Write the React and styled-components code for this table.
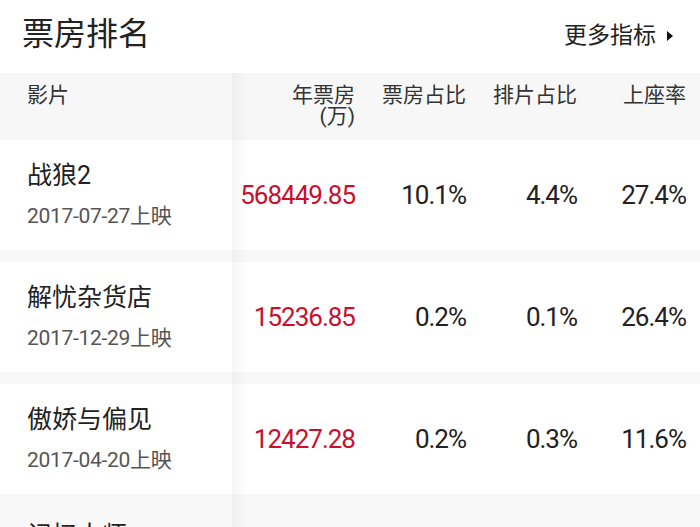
import React from "react";
import styled, { createGlobalStyle } from "styled-components";

const Global = createGlobalStyle`
  html, body { margin: 0; padding: 0; background: #fff; }
  body { font-family: Roboto, "Noto Sans CJK SC", sans-serif; }
  * { box-sizing: border-box; }
`;

const Page = styled.div`
  width: 700px;
  height: 527px;
  overflow: hidden;
  background: #fff;
`;

const TitleBar = styled.div`
  height: 73px;
  display: flex;
  align-items: center;
  justify-content: space-between;
  padding: 0 27px 6px 22px;
`;

const Title = styled.h1`
  margin: 0;
  font-size: 32px;
  font-weight: 400;
  line-height: 32px;
  color: #222;
`;

const More = styled.div`
  display: flex;
  align-items: center;
  gap: 11px;
  font-size: 23px;
  line-height: 24px;
  color: #222;
  margin-top: 4px;
`;

const Arrow = styled.span`
  width: 0;
  height: 0;
  border-top: 5px solid transparent;
  border-bottom: 5px solid transparent;
  border-left: 6px solid #111;
`;

const Table = styled.div`
  position: relative;
  &::after {
    content: "";
    position: absolute;
    left: 232px;
    top: 0;
    bottom: 0;
    width: 16px;
    background: linear-gradient(to right, rgba(0, 0, 0, 0.035), rgba(0, 0, 0, 0));
    pointer-events: none;
  }
`;

const cols = "232px 137px 111px 111px 109px";

const HeadRow = styled.div`
  display: grid;
  grid-template-columns: ${cols};
  height: 67px;
  background: #f7f7f7;
`;

const HeadCell = styled.div`
  padding: 12px 14px 0 ${(p) => (p.$first ? "27px" : "0")};
  text-align: ${(p) => (p.$first ? "left" : "right")};
  font-size: 21px;
  line-height: 21px;
  color: #333;
`;

const Row = styled.div`
  display: grid;
  grid-template-columns: ${cols};
  height: 110px;
  background: ${(p) => (p.$grey ? "#f8f8f8" : "#fff")};
  align-items: center;
`;

const Gap = styled.div`
  height: 12px;
  background: #f8f8f8;
`;

const NameCell = styled.div`
  display: flex;
  flex-direction: column;
  justify-content: center;
  gap: 10px;
  padding-left: 27px;
  align-self: ${(p) => (p.$top ? "start" : "center")};
  padding-top: ${(p) => (p.$top ? "14px" : "0")};
`;

const Name = styled.div`
  font-size: 25px;
  line-height: 32px;
  color: #222;
`;

const DateText = styled.div`
  font-size: 21px;
  line-height: 28px;
  color: #555;
  letter-spacing: -0.3px;
`;

const NumCell = styled.div`
  text-align: right;
  padding-right: 14px;
  font-size: 26px;
  letter-spacing: -1px;
  line-height: 30px;
  color: ${(p) => (p.$red ? "#c8102e" : "#222")};
`;

const films = [
  { name: "战狼2", date: "2017-07-27上映", box: "568449.85", share: "10.1%", sched: "4.4%", seat: "27.4%" },
  { name: "解忧杂货店", date: "2017-12-29上映", box: "15236.85", share: "0.2%", sched: "0.1%", seat: "26.4%" },
  { name: "傲娇与偏见", date: "2017-04-20上映", box: "12427.28", share: "0.2%", sched: "0.3%", seat: "11.6%" },
  { name: "记忆大师", date: "2017-04-28上映", box: "", share: "", sched: "", seat: "", partial: true },
];

export default function App() {
  return (
    <Page>
      <Global />
      <TitleBar>
        <Title>票房排名</Title>
        <More>
          更多指标
          <Arrow />
        </More>
      </TitleBar>
      <Table>
        <HeadRow>
          <HeadCell $first>影片</HeadCell>
          <HeadCell>
            年票房
            <br />
            (万)
          </HeadCell>
          <HeadCell>票房占比</HeadCell>
          <HeadCell>排片占比</HeadCell>
          <HeadCell>上座率</HeadCell>
        </HeadRow>
        {films.map((f, i) => (
          <React.Fragment key={f.name}>
            {i > 0 && <Gap />}
            <Row $grey={f.partial}>
              <NameCell $top={f.partial}>
                <Name>{f.name}</Name>
                <DateText>{f.date}</DateText>
              </NameCell>
              <NumCell $red>{f.box}</NumCell>
              <NumCell>{f.share}</NumCell>
              <NumCell>{f.sched}</NumCell>
              <NumCell>{f.seat}</NumCell>
            </Row>
          </React.Fragment>
        ))}
      </Table>
    </Page>
  );
}
